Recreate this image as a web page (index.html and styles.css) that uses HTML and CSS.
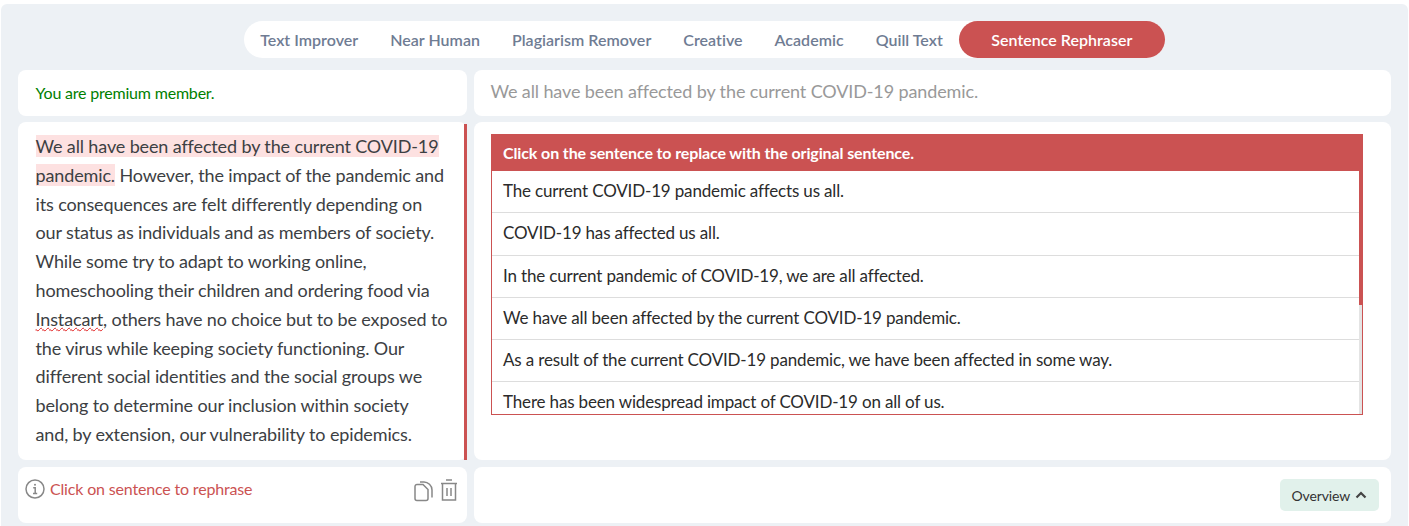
FILE: index.html
```html
<!DOCTYPE html>
<html lang="en">
  <head>
    <meta charset="UTF-8" />
    <meta name="viewport" content="width=device-width, initial-scale=1.0" />
    <title>Sentence Rephraser</title>
    <link rel="stylesheet" href="styles.css">
  </head>
  <body>
    <div class="wrapper">
      <div class="tabs">
        <a class="tab">Text Improver</a>
        <a class="tab">Near Human</a>
        <a class="tab">Plagiarism Remover</a>
        <a class="tab">Creative</a>
        <a class="tab">Academic</a>
        <a class="tab">Quill Text</a>
        <a class="tab active">Sentence Rephraser</a>
      </div>
      <div class="panels">
        <div class="card status">You are premium member.</div>
        <div class="card source">We all have been affected by the current COVID-19 pandemic.</div>
        <div class="card editorcard">
          <div class="editor"><span class="picked">We all have been affected by the current COVID-19 pandemic.</span> However, the impact of the pandemic and its consequences are felt differently depending on our status as individuals and as members of society. While some try to adapt to working online, homeschooling their children and ordering food via <span class="typo">Instacart</span>, others have no choice but to be exposed to the virus while keeping society functioning. Our different social identities and the social groups we belong to determine our inclusion within society<br>and, by extension, our vulnerability to epidemics.</div>
        </div>
        <div class="card resultcard">
          <div class="results">
            <div class="resulthead">Click on the sentence to replace with the original sentence.</div>
            <ul class="sentences">
              <li>The current COVID-19 pandemic affects us all.</li>
              <li>COVID-19 has affected us all.</li>
              <li>In the current pandemic of COVID-19, we are all affected.</li>
              <li>We have all been affected by the current COVID-19 pandemic.</li>
              <li>As a result of the current COVID-19 pandemic, we have been affected in some way.</li>
              <li>There has been widespread impact of COVID-19 on all of us.</li>
            </ul>
            <div class="track"><div class="thumb"></div></div>
          </div>
        </div>
        <div class="card toolbar">
          <svg class="icon" width="20" height="20" viewBox="0 0 20 20" fill="none" stroke="#888" stroke-width="1.5">
            <circle cx="10" cy="10" r="9"/>
            <path d="M8.200 8.800h2v5.400M8 14.400h4.200"/>
            <circle cx="10" cy="5.800" r="1" fill="#888" stroke="none"/>
          </svg>
          <span class="hint">Click on sentence to rephrase</span>
          <svg class="icon copy" width="19" height="21" viewBox="0 0 19 21" fill="none" stroke="#888" stroke-width="1.5">
            <path d="M3 3.500h6l5 5v9a2 2 0 0 1-2 2H3a2 2 0 0 1-2-2v-12a2 2 0 0 1 2-2z"/>
            <path d="M6 1h4c4 0 8 3.500 8 8v7.500"/>
          </svg>
          <svg class="icon" width="18" height="22" viewBox="0 0 18 22" fill="none" stroke="#888" stroke-width="1.5">
            <path d="M1 4.500h16M6 1h6M2.500 4.500V21h13V4.500M7 9v8M11 9v8"/>
          </svg>
        </div>
        <div class="card actions">
          <button class="overview">Overview
            <svg width="12" height="8" viewBox="0 0 12 8" fill="none" stroke="#444" stroke-width="2.200">
              <path d="M1.500 6.500 6 2l4.500 4.500"/>
            </svg>
          </button>
        </div>
      </div>
    </div>
  </body>
</html>
```

FILE: styles.css
```css
* {
  margin: 0px;
  padding: 0px;
  box-sizing: border-box;
}
html,
body {
  height: 100%;
  overflow: hidden;
  background-color: #fff;
}
body {
  padding: 4px 1px 0;
  font-family: "Lato", "Liberation Sans", sans-serif;
}
.wrapper {
  height: 100%;
  padding: 17px 17px 0;
  background-color: #edf1f5;
  border-radius: 6px 6px 0 0;
}
.tabs {
  display: flex;
  width: fit-content;
  height: 37px;
  margin: 0 auto 12px;
  background-color: #fff;
  border-radius: 19px;
}
.tab {
  display: flex;
  align-items: center;
  padding: 0 16px;
  font-size: 16px;
  font-weight: 600;
  letter-spacing: 0.02px;
  color: #6f7c93;
}
.tab.active {
  padding: 0 32.500px;
  color: #fff;
  background-color: #cb5252;
  border-radius: 19px;
}
.panels {
  display: grid;
  grid-template-columns: 449px 917px;
  grid-template-rows: 46px 338px 57px;
  column-gap: 7px;
  row-gap: 6px;
}
.card {
  background-color: #fff;
  border-radius: 8px;
}
.status {
  display: flex;
  align-items: center;
  padding-left: 17.500px;
  padding-bottom: 1px;
  font-size: 16px;
  letter-spacing: -0.2px;
  color: #008000;
}
.source {
  display: flex;
  align-items: center;
  padding-left: 16.500px;
  padding-bottom: 4px;
  font-size: 18px;
  letter-spacing: -0.12px;
  color: #999;
}
.editorcard {
  padding-top: 2px;
}
.editor {
  height: 100%;
  padding: 8px 15px 0 17.500px;
  border-right: 3px solid #cb5252;
  font-size: 18px;
  line-height: 28.800px;
  letter-spacing: -0.13px;
  color: #3c4043;
}
.picked {
  background-color: #fde1e1;
}
.typo {
  text-decoration: underline wavy #e02020 1px;
}
.resultcard {
  padding: 12px 28px 0 17px;
}
.results {
  position: relative;
  display: flex;
  flex-direction: column;
  height: 281px;
  border: 1px solid #cb5252;
  border-top: 0;
}
.resulthead {
  flex: none;
  height: 37px;
  margin: 0 -1px;
  padding: 9px 12px 0;
  font-size: 16px;
  font-weight: 700;
  letter-spacing: -0.12px;
  color: #fff;
  background-color: #cb5252;
}
.sentences {
  flex: 1;
  min-height: 0;
  overflow: hidden;
  list-style: none;
}
.sentences li {
  height: 42.250px;
  padding: 7px 11px 0;
  font-size: 17px;
  line-height: 26px;
  letter-spacing: -0.16px;
  color: #2b2b2b;
  border-bottom: 1px solid #ddd;
}
.track {
  position: absolute;
  top: 37px;
  right: 0;
  bottom: 0;
  width: 3px;
  background-color: #e4e4e4;
}
.thumb {
  width: 4px;
  height: 134px;
  background-color: #cb5252;
}
.toolbar {
  display: flex;
  align-items: flex-start;
  margin-top: 1px;
  padding: 12px 9px 0 7px;
}
.hint {
  flex: 1;
  margin-left: 5px;
  font-size: 16px;
  line-height: 20px;
  letter-spacing: -0.17px;
  color: #cb5252;
}
.icon {
  flex: none;
}
.copy {
  margin-right: 7px;
  margin-top: 2px;
}
.actions {
  display: flex;
  justify-content: flex-end;
  align-items: flex-start;
  padding: 12px 12px 0 0;
  margin-top: 1px;
}
.overview {
  display: flex;
  align-items: center;
  gap: 5px;
  height: 32px;
  padding: 0 12px;
  font-family: inherit;
  font-size: 14px;
  letter-spacing: -0.15px;
  color: #333;
  background-color: #e1f1eb;
  border: 0;
  border-radius: 5px;
}
```
